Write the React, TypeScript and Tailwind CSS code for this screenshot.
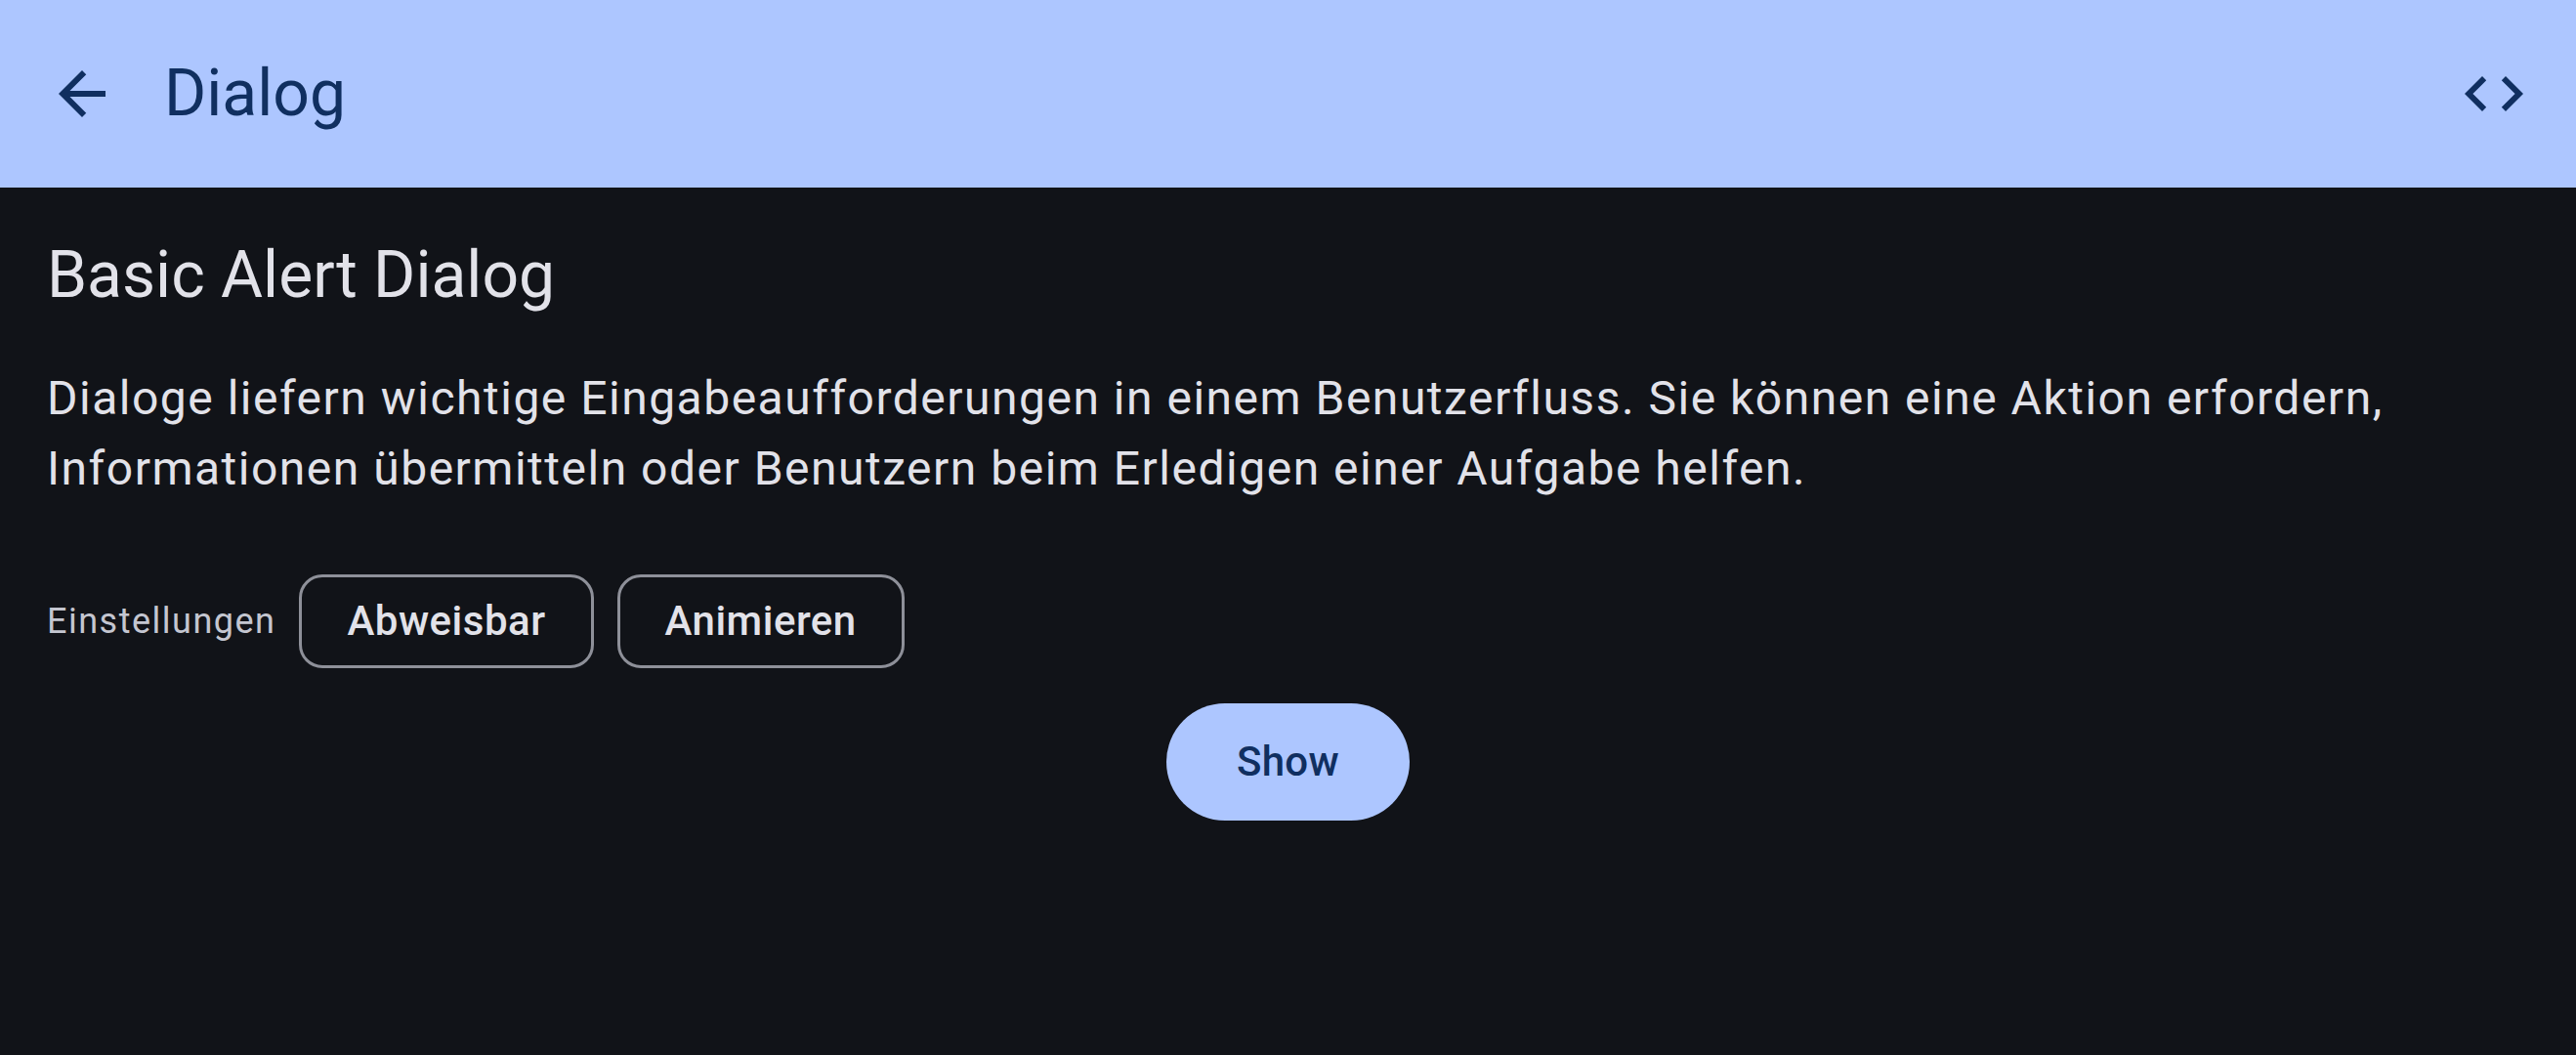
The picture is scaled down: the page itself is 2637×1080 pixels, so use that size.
const OPTIONS = ['Abweisbar', 'Animieren'];

function ArrowBackIcon() {
  return (
    <svg viewBox="0 0 24 24" className="h-[72px] w-[72px] fill-current">
      <path d="M20 11H7.83l5.59-5.59L12 4l-8 8 8 8 1.41-1.41L7.83 13H20v-2z" />
    </svg>
  );
}

function CodeIcon() {
  return (
    <svg viewBox="0 0 24 24" className="h-[72px] w-[72px] fill-current">
      <path d="M9.4 16.6L4.8 12l4.6-4.6L8 6l-6 6 6 6 1.4-1.4zm5.2 0l4.6-4.6-4.6-4.6L16 6l6 6-6 6-1.4-1.4z" />
    </svg>
  );
}

export default function App() {
  return (
    <div className="min-h-screen bg-[#111318] font-['Roboto',sans-serif] text-[#e2e2e9]">
      {/* top app bar */}
      <header className="flex h-[192px] items-center bg-[#adc6ff] px-[12px] text-[#102f60]">
        <button className="flex h-[144px] w-[144px] items-center justify-center rounded-full">
          <ArrowBackIcon />
        </button>
        <h1 className="ml-[12px] flex-1 text-[66px] leading-[84px]">Dialog</h1>
        <button className="flex h-[144px] w-[144px] items-center justify-center rounded-full">
          <CodeIcon />
        </button>
      </header>

      <main className="px-[48px] pt-[48px]">
        <h2 className="text-[66px] leading-[84px]">Basic Alert Dialog</h2>
        <p className="mt-[48px] text-[48px] leading-[72px] tracking-[1.5px]">
          Dialoge liefern wichtige Eingabeaufforderungen in einem Benutzerfluss. Sie können eine
          Aktion erfordern, Informationen übermitteln oder Benutzern beim Erledigen einer Aufgabe
          helfen.
        </p>

        <div className="mt-[48px] flex h-[144px] items-center gap-[24px]">
          <span className="text-[36px] leading-[48px] tracking-[1.5px] text-[#c4c6d0]">
            Einstellungen
          </span>
          {OPTIONS.map((o) => (
            <button
              key={o}
              className="flex h-[96px] items-center rounded-[24px] border-[3px] border-[#8e9099] px-[46px] text-[42px] font-medium leading-[60px] tracking-[0.5px] text-[#e2e2e9]"
            >
              {o}
            </button>
          ))}
        </div>

        <div className="flex h-[144px] items-center justify-center">
          <button className="flex h-[120px] items-center rounded-full bg-[#adc6ff] px-[72px] text-[42px] font-medium leading-[60px] tracking-[0.3px] text-[#102f60]">
            Show
          </button>
        </div>
      </main>
    </div>
  );
}
